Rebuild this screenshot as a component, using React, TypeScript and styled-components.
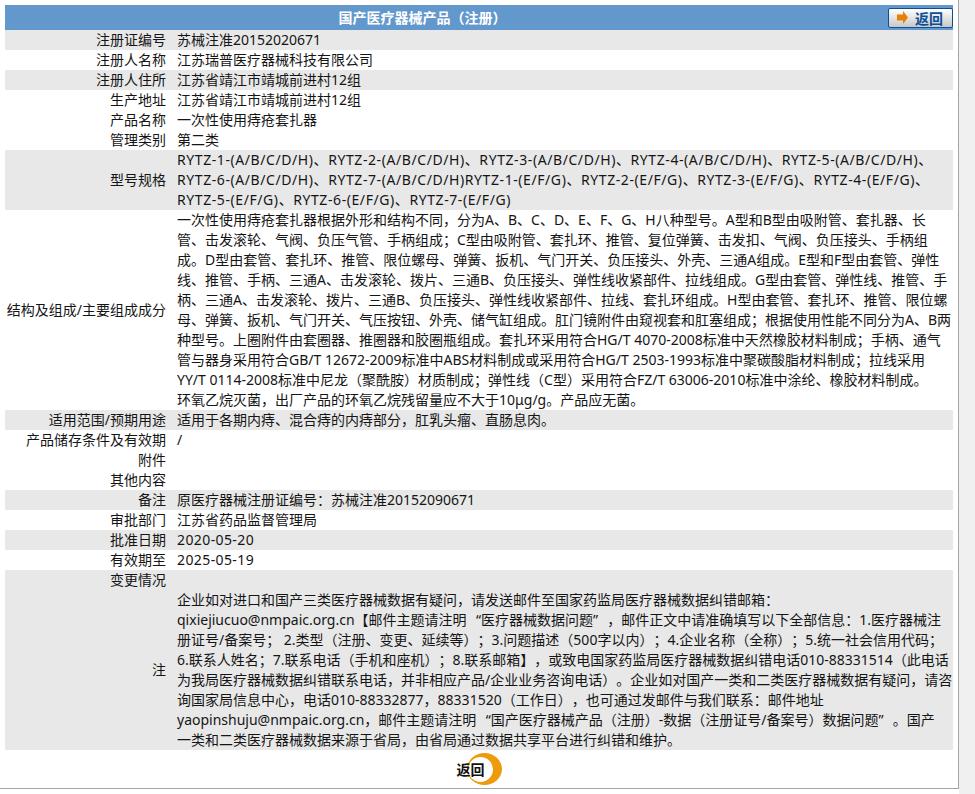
import React from "react";
import styled, { createGlobalStyle } from "styled-components";

const Global = createGlobalStyle`
  html, body { margin: 0; padding: 0; background: #fff; overflow: hidden; }
  body {
    font-family: "Noto Sans", "Noto Sans CJK SC", sans-serif;
    font-size: 14px;
    color: #151515;
    text-spacing-trim: space-all;
  }
`;

const Page = styled.div`
  display: flex;
  width: 975px;
  height: 794px;
`;
const Frame = styled.div`
  width: 959px;
  height: 789px;
  box-sizing: border-box;
  padding: 5px 5px 0 5px;
  border-bottom: 1px solid #a6a6a6;
  border-right: 1px solid #a6a6a6;
  overflow: hidden;
`;
const Rail = styled.div`
  width: 16px;
  height: 794px;
  background: #f0f0f0;
`;
const Header = styled.div`
  display: grid;
  grid-template-columns: 835px 1fr;
  align-items: center;
  height: 25px;
  background: #6398cd;
`;
const Title = styled.div`
  text-align: center;
  color: #fff;
  font-weight: 700;
  font-size: 14px;
  line-height: 25px;
  font-family: "Noto Sans CJK SC", sans-serif;
`;
const BackButton = styled.button`
  justify-self: end;
  width: 65px;
  height: 20px;
  margin: 0;
  padding: 0 0 0 8px;
  display: flex;
  align-items: center;
  gap: 7px;
  box-sizing: border-box;
  border: 1px solid #0c4f95;
  border-radius: 2px;
  background: linear-gradient(#ffffff, #c8c8c8);
  color: #0c4f95;
  font: 700 14px/18px "Noto Sans CJK SC", sans-serif;
`;
const Row = styled.div<{ $shade?: boolean }>`
  display: grid;
  grid-template-columns: 161px 1fr;
  column-gap: 11px;
  align-items: center;
  background: ${(p) => (p.$shade ? "#e8e8e8" : "#fff")};
`;
const Label = styled.div`
  text-align: right;
  line-height: 20px;
  white-space: nowrap;
`;
const Value = styled.div<{ $spacing?: number }>`
  line-height: 20px;
  min-height: 20px;
  white-space: pre-line;
  letter-spacing: ${(p) => p.$spacing ?? 0}px;
`;
const NoticeRow = styled(Row)`
  align-items: start;
`;
const NoticeLabels = styled.div`
  display: flex;
  flex-direction: column;
  height: 180px;
`;
const NoticeLabel = styled(Label)`
  flex: 1;
  display: flex;
  align-items: center;
  justify-content: flex-end;
`;
const Notice = styled(Value)`
  padding-top: 20px;
`;
const Footer = styled.div`
  display: flex;
  justify-content: center;
  height: 34px;
  padding-top: 3px;
  box-sizing: border-box;
`;
const FooterLink = styled.a`
  position: relative;
  display: block;
  width: 45px;
  height: 32px;
`;
const FooterText = styled.span`
  position: absolute;
  left: 0;
  top: 7px;
  color: #111;
  font: 700 14px/18px "Noto Sans CJK SC", sans-serif;
`;

const rows: [string, string, boolean, number?][] = [
  ["注册证编号", "苏械注准20152020671", true],
  ["注册人名称", "江苏瑞普医疗器械科技有限公司", false],
  ["注册人住所", "江苏省靖江市靖城前进村12组", true],
  ["生产地址", "江苏省靖江市靖城前进村12组", false],
  ["产品名称", "一次性使用痔疮套扎器", false],
  ["管理类别", "第二类", false],
  ["型号规格", "RYTZ-1-(A/B/C/D/H)、RYTZ-2-(A/B/C/D/H)、RYTZ-3-(A/B/C/D/H)、RYTZ-4-(A/B/C/D/H)、RYTZ-5-(A/B/C/D/H)、RYTZ-6-(A/B/C/D/H)、RYTZ-7-(A/B/C/D/H)RYTZ-1-(E/F/G)、RYTZ-2-(E/F/G)、RYTZ-3-(E/F/G)、RYTZ-4-(E/F/G)、RYTZ-5-(E/F/G)、RYTZ-6-(E/F/G)、RYTZ-7-(E/F/G)", true, 0.58],
  ["结构及组成/主要组成成分", "一次性使用痔疮套扎器根据外形和结构不同，分为A、B、C、D、E、F、G、H八种型号。A型和B型由吸附管、套扎器、长管、击发滚轮、气阀、负压气管、手柄组成；C型由吸附管、套扎环、推管、复位弹簧、击发扣、气阀、负压接头、手柄组成。D型由套管、套扎环、推管、限位螺母、弹簧、扳机、气门开关、负压接头、外壳、三通A组成。E型和F型由套管、弹性线、推管、手柄、三通A、击发滚轮、拨片、三通B、负压接头、弹性线收紧部件、拉线组成。G型由套管、弹性线、推管、手柄、三通A、击发滚轮、拨片、三通B、负压接头、弹性线收紧部件、拉线、套扎环组成。H型由套管、套扎环、推管、限位螺母、弹簧、扳机、气门开关、气压按钮、外壳、储气缸组成。肛门镜附件由窥视套和肛塞组成；根据使用性能不同分为A、B两种型号。上圈附件由套圈器、推圈器和胶圈瓶组成。套扎环采用符合HG/T 4070-2008标准中天然橡胶材料制成；手柄、通气管与器身采用符合GB/T 12672-2009标准中ABS材料制成或采用符合HG/T 2503-1993标准中聚碳酸脂材料制成；拉线采用YY/T 0114-2008标准中尼龙（聚酰胺）材质制成；弹性线（C型）采用符合FZ/T 63006-2010标准中涂纶、橡胶材料制成。\n环氧乙烷灭菌，出厂产品的环氧乙烷残留量应不大于10μg/g。产品应无菌。", false],
  ["适用范围/预期用途", "适用于各期内痔、混合痔的内痔部分，肛乳头瘤、直肠息肉。", true],
  ["产品储存条件及有效期", "/", false],
  ["附件", "", false],
  ["其他内容", "", false],
  ["备注", "原医疗器械注册证编号：苏械注准20152090671", true],
  ["审批部门", "江苏省药品监督管理局", false],
  ["批准日期", "2020-05-20", true, 0.4],
  ["有效期至", "2025-05-19", false, 0.4],
];

const notice = "企业如对进口和国产三类医疗器械数据有疑问，请发送邮件至国家药监局医疗器械数据纠错邮箱：qixiejiucuo@nmpaic.org.cn【邮件主题请注明\u2002\u2009“医疗器械数据问题”\u2002\u2009，邮件正文中请准确填写以下全部信息：1.医疗器械注\n册证号/备案号； 2.类型（注册、变更、延续等）；3.问题描述（500字以内）；4.企业名称（全称）；5.统一社会信用代码；\n6.联系人姓名；7.联系电话（手机和座机）；8.联系邮箱】，或致电国家药监局医疗器械数据纠错电话010-88331514（此电话\n为我局医疗器械数据纠错联系电话，并非相应产品/企业业务咨询电话）。企业如对国产一类和二类医疗器械数据有疑问，请咨\n询国家局信息中心，电话010-88332877，88331520（工作日），也可通过发邮件与我们联系：邮件地址\nyaopinshuju@nmpaic.org.cn，邮件主题请注明\u2002\u2009“国产医疗器械产品（注册）-数据（注册证号/备案号）数据问题”\u2002\u2009。国产\n一类和二类医疗器械数据来源于省局，由省局通过数据共享平台进行纠错和维护。";

const ArrowIcon = () => (
  <svg width="11" height="13" viewBox="0 0 11 13" aria-hidden="true">
    <path d="M0 3.5h6V0l5 6.5-5 6.5V9.5H0z" fill="#e87f06" />
  </svg>
);

const Crescent = () => (
  <svg width="45" height="32" viewBox="0 0 45 32" aria-hidden="true" style={{ display: "block" }}>
    <ellipse cx="27.5" cy="16" rx="17.5" ry="16" fill="#ee9b0b" />
    <circle cx="23.5" cy="16.5" r="12.5" fill="#fff" />
  </svg>
);

export default function App() {
  return (
    <>
      <Global />
      <Page>
        <Frame>
          <Header>
            <Title>国产医疗器械产品（注册）</Title>
            <BackButton type="button">
              <ArrowIcon />
              返回
            </BackButton>
          </Header>
          {rows.map(([l, v, s, sp]) => (
            <Row key={l} $shade={s}>
              <Label>{l}</Label>
              <Value $spacing={sp}>{v}</Value>
            </Row>
          ))}
          <NoticeRow $shade>
            <NoticeLabels>
              <Label>变更情况</Label>
              <NoticeLabel>注</NoticeLabel>
            </NoticeLabels>
            <Notice>{notice}</Notice>
          </NoticeRow>
          <Footer>
            <FooterLink>
              <Crescent />
              <FooterText>返回</FooterText>
            </FooterLink>
          </Footer>
        </Frame>
        <Rail />
      </Page>
    </>
  );
}
